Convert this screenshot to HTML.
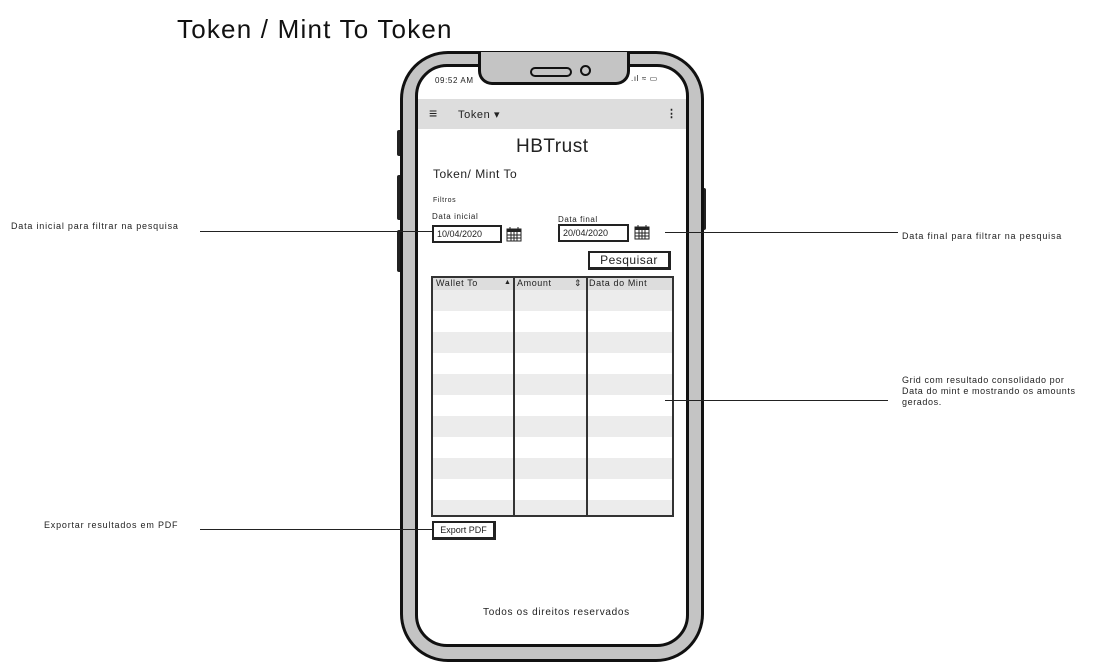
<!DOCTYPE html>
<html><head><style>
body{margin:0;width:1114px;height:667px;background:#fff;position:relative;overflow:hidden;font-family:"Liberation Sans",sans-serif;color:#222}
.a{position:absolute}
.t{font-size:10px;white-space:nowrap;letter-spacing:0.6px}
.ln{position:absolute;height:1px;background:#222}
</style></head><body>
<div class="a" style="left:177px;top:14px;font-size:26px;color:#111;letter-spacing:1.2px">Token / Mint To Token</div>

<div class="a" style="left:397px;top:130px;width:5px;height:26px;background:#222;border-radius:2px"></div>
<div class="a" style="left:397px;top:175px;width:5px;height:45px;background:#222;border-radius:2px"></div>
<div class="a" style="left:397px;top:230px;width:5px;height:42px;background:#222;border-radius:2px"></div>
<div class="a" style="left:701px;top:188px;width:5px;height:42px;background:#222;border-radius:2px"></div>

<div class="a" style="left:400px;top:51px;width:298px;height:605px;border:3px solid #111;border-radius:48px;background:#c4c4c4"></div>
<div class="a" style="left:415px;top:64px;width:268px;height:577px;border:3px solid #111;border-radius:32px;background:#fff;overflow:hidden">
  <div class="a" style="left:0;top:32px;width:268px;height:30px;background:#ddd"></div>
</div>
<div class="a" style="left:478px;top:52px;width:146px;height:30px;background:#c4c4c4;border:3px solid #111;border-top:none;border-radius:0 0 14px 14px"></div>
<div class="a" style="left:530px;top:67px;width:38px;height:6px;border:2px solid #111;border-radius:5px"></div>
<div class="a" style="left:580px;top:65px;width:7px;height:7px;border:2px solid #111;border-radius:50%"></div>
<div class="a t" style="left:435px;top:76px;font-size:8px">09:52 AM</div>
<div class="a t" style="left:631px;top:74px;font-size:8px">.ıl ≈ ▭</div>

<div class="a" style="left:429px;top:108px;font-size:14px;line-height:10px">≡</div>
<div class="a t" style="left:458px;top:108px;font-size:11px">Token ▾</div>
<div class="a t" style="left:666px;top:107px;font-size:11px;font-weight:bold">⋮</div>

<div class="a" style="left:516px;top:136px;font-size:19px;letter-spacing:0.5px">HBTrust</div>
<div class="a" style="left:433px;top:167px;font-size:12px;letter-spacing:0.5px">Token/ Mint To</div>
<div class="a t" style="left:433px;top:197px;font-size:7px">Filtros</div>
<div class="a t" style="left:432px;top:212px;font-size:8px">Data inicial</div>
<div class="a t" style="left:558px;top:215px;font-size:8px">Data final</div>
<div class="a" style="left:432px;top:225px;width:63px;height:14px;border:2px solid #222;font-size:9px;line-height:14px;padding-left:3px">10/04/2020</div>
<div class="a" style="left:558px;top:224px;width:64px;height:14px;border:2px solid #222;font-size:9px;line-height:14px;padding-left:3px">20/04/2020</div>
<svg class="a" style="left:506px;top:226px" width="16" height="16" viewBox="0 0 16 16"><rect x="1" y="3" width="14" height="12" fill="#fff" stroke="#222"/><rect x="1" y="3" width="14" height="3" fill="#222"/><path d="M1 9H15M1 12H15M5 6V15M8 6V15M11 6V15M4 1V4M12 1V4" stroke="#222" fill="none"/></svg>
<svg class="a" style="left:634px;top:224px" width="16" height="16" viewBox="0 0 16 16"><rect x="1" y="3" width="14" height="12" fill="#fff" stroke="#222"/><rect x="1" y="3" width="14" height="3" fill="#222"/><path d="M1 9H15M1 12H15M5 6V15M8 6V15M11 6V15M4 1V4M12 1V4" stroke="#222" fill="none"/></svg>
<div class="a" style="left:588px;top:251px;width:78px;height:14px;border:2px solid #222;border-right-width:3px;border-bottom-width:3px;font-size:12px;line-height:14px;text-align:center;letter-spacing:0.5px">Pesquisar</div>

<div class="a" style="left:431px;top:276px;width:239px;height:237px;border:2px solid #333;overflow:hidden;background:repeating-linear-gradient(#ececec 0 21px,#fff 21px 42px) 0 12px/100% 100% no-repeat">
  <div class="a" style="left:0;top:0;width:241px;height:12px;background:#ddd"></div>
  <div class="a t" style="left:3px;top:0;font-size:9px">Wallet To</div>
  <div class="a t" style="left:71px;top:1px;font-size:7px">▲</div>
  <div class="a t" style="left:84px;top:0;font-size:9px">Amount</div>
  <div class="a t" style="left:141px;top:0;font-size:9px">⇕</div>
  <div class="a t" style="left:156px;top:0;font-size:9px">Data do Mint</div>
  <div class="a" style="left:80px;top:0;width:2px;height:237px;background:#333"></div>
  <div class="a" style="left:153px;top:0;width:2px;height:237px;background:#333"></div>
</div>
<div class="a" style="left:432px;top:521px;width:59px;height:14px;border:2px solid #222;border-right-width:3px;border-bottom-width:3px;font-size:9px;line-height:14px;text-align:center">Export PDF</div>
<div class="a t" style="left:483px;top:607px;font-size:10px;letter-spacing:0.7px">Todos os direitos reservados</div>

<div class="ln" style="left:200px;top:231px;width:232px"></div>
<div class="ln" style="left:665px;top:232px;width:233px"></div>
<div class="ln" style="left:665px;top:400px;width:223px"></div>
<div class="ln" style="left:200px;top:529px;width:232px"></div>
<div class="a t" style="left:11px;top:221px;font-size:9px;letter-spacing:0.8px">Data inicial para filtrar na pesquisa</div>
<div class="a t" style="left:902px;top:231px;font-size:9px;letter-spacing:0.8px">Data final para filtrar na pesquisa</div>
<div class="a t" style="left:902px;top:375px;line-height:11px;font-size:9px;letter-spacing:0.6px">Grid com resultado consolidado por<br>Data do mint e mostrando os amounts<br>gerados.</div>
<div class="a t" style="left:44px;top:520px;font-size:9px;letter-spacing:0.8px">Exportar resultados em PDF</div>
</body></html>
